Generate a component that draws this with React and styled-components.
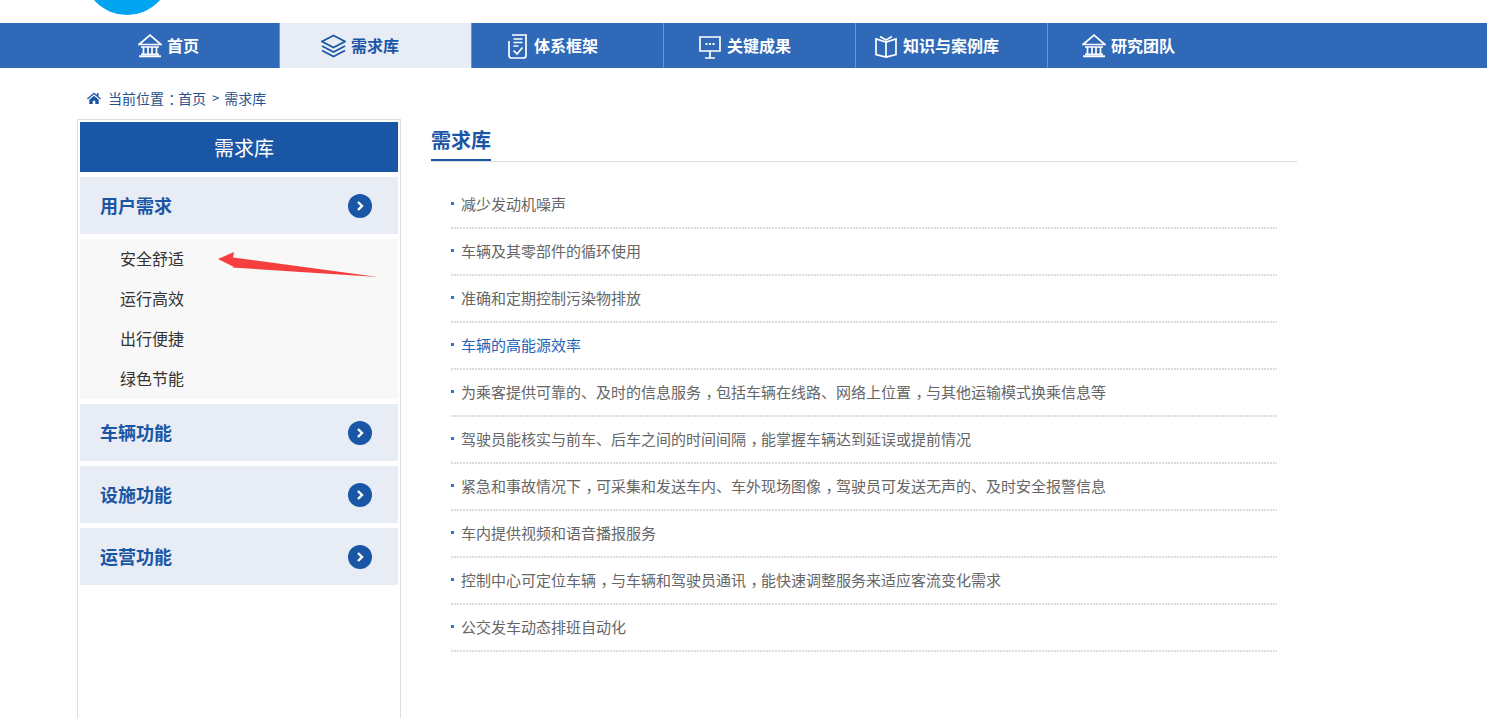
import React from "react";
import styled, { createGlobalStyle } from "styled-components";

const Global = createGlobalStyle`
  html, body { margin: 0; padding: 0; background: #fff; overflow: hidden; }
  body { font-family: "Noto Sans CJK SC", "Liberation Sans", sans-serif; }
  * { box-sizing: border-box; }
`;

const Page = styled.div`
  position: relative;
  width: 1487px;
  height: 718px;
  overflow: hidden;
`;

const TopBar = styled.div`
  position: relative;
  height: 23px;
  overflow: hidden;
`;

const Logo = styled.div`
  position: absolute;
  left: 83px;
  top: -73px;
  width: 88px;
  height: 88px;
  border-radius: 50%;
  background: #00a4ef;
`;

const Nav = styled.nav`
  display: flex;
  height: 45px;
  background: #2f69b7;
`;

const NavItem = styled.a`
  display: flex;
  align-items: center;
  gap: 5px;
  width: ${(p) => p.$w}px;
  padding: 0 0 2px ${(p) => p.$pad}px;
  border-right: 1px solid #6e96cc;
  background: ${(p) => (p.$active ? "#e8ecf5" : "transparent")};
  color: ${(p) => (p.$active ? "#1a56a6" : "#fff")};
  font-size: 16px;
  font-weight: 700;
  white-space: nowrap;

  &:last-child {
    border-right: 0;
  }
`;

const Crumbs = styled.div`
  display: flex;
  align-items: center;
  height: 51px;
  padding: 9px 0 0 87px;
  color: #24528f;
  font-size: 14px;
  line-height: 20px;
`;

const CrumbIcon = styled.svg`
  width: 14px;
  height: 12px;
  margin-right: 7px;
  fill: #1a56a6;
`;

const CrumbSep = styled.span`
  margin: 0 5px 0 6px;
  font-size: 13px;
`;

/* full-width marks sit centred in the em box in the reference */
const Mark = styled.span`
  padding: 0 0.2em 0 0.3em;
  font-feature-settings: "halt";
`;

const Main = styled.div`
  display: flex;
  gap: 30px;
  padding-left: 77px;
`;

const Side = styled.aside`
  display: flex;
  flex-direction: column;
  gap: 5px;
  width: 324px;
  height: 620px;
  padding: 2px;
  border: 1px solid #ddd;
`;

const SideTitle = styled.div`
  flex: none;
  height: 50px;
  padding-left: 10px;
  line-height: 52px;
  background: #1a56a6;
  color: #fff;
  font-size: 20px;
  text-align: center;
`;

const Group = styled.div`
  flex: none;
  display: flex;
  align-items: center;
  justify-content: space-between;
  height: 57px;
  padding: 0 26px 2px 20px;
  background: #e8ecf5;
  color: #1a56a6;
  font-size: 18px;
  font-weight: 700;
`;

const Chevron = styled.span`
  display: flex;
  align-items: center;
  justify-content: center;
  width: 24px;
  height: 24px;
  margin-top: 2px;
  border-radius: 50%;
  background: #1a56a6;
`;

const SubList = styled.ul`
  flex: none;
  margin: 0;
  padding: 0;
  list-style: none;
  background: #f8f8f8;
`;

const SubItem = styled.li`
  height: 40px;
  padding-left: 40px;
  color: #333;
  font-size: 16px;
  line-height: 38px;
`;

const Arrow = styled.svg`
  position: absolute;
  left: 215px;
  top: 248px;
  width: 170px;
  height: 34px;
`;

const Content = styled.section`
  width: 866px;
  padding-top: 1px;
`;

const Heading = styled.div`
  height: 42px;
  border-bottom: 1px solid #ddd;
`;

const HeadingText = styled.h2`
  display: inline-block;
  height: 41px;
  margin: 0;
  border-bottom: 2px solid #1a56a6;
  color: #1a56a6;
  font-size: 20px;
  font-weight: 700;
  line-height: 40px;
`;

const Rows = styled.ul`
  margin: 20px 20px 0;
  padding: 0;
  list-style: none;
`;

const Row = styled.li`
  display: flex;
  align-items: center;
  gap: 7px;
  height: 47px;
  padding-bottom: 5px;
  background: repeating-linear-gradient(90deg, #dcdcdc 0 2px, transparent 2px 3px) left bottom / 100% 2px no-repeat;
  color: ${(p) => (p.$hot ? "#1f62b8" : "#666")};
  font-size: 15px;
  white-space: nowrap;
`;

const Bullet = styled.i`
  width: 3px;
  height: 3px;
  background: #2a75d8;
`;

const NavSvg = styled.svg`
  width: ${(p) => p.$size || 24}px;
  height: 28px;
  fill: none;
  stroke: currentColor;
  stroke-width: 1.7;
  flex: none;
`;

const BankIcon = () => (
  <NavSvg viewBox="0 0 24 28">
    <path d="M1 13.500 12 4l11 9.500ZM3 16h18M5.500 16v7M10 16v7M14 16v7M18.500 16v7M3 23.300h18" />
    <path d="M1 25.300h22" strokeWidth="2" />
  </NavSvg>
);

const LayersIcon = () => (
  <NavSvg viewBox="0 0 25 28" $size={25}>
    <path d="M12.500 4.500 24 10.500l-11.500 6L1 10.500ZM1 15l11.500 6L24 15M1 19.500l11.500 6 11.500-6" />
  </NavSvg>
);

const ClipIcon = () => (
  <NavSvg viewBox="0 0 22 28" $size={22}>
    <path d="M5 4h14v20.500c0 1.500-1 2.500-2.500 2.500h-12C3 27 2 26 2 24.500V10" />
    <path d="M6.500 8h9M6.500 11.500h9M6.500 15h5M6.500 19.500l3.500 3.500 5.500-6.500" />
  </NavSvg>
);

const ScreenIcon = () => (
  <NavSvg viewBox="0 0 24 28">
    <path d="M2 6h20v14H2ZM12 20v7M7 27h10" />
    <path d="M7.500 13h2M11 13h2M14.500 13h2" strokeWidth="2" />
  </NavSvg>
);

const BookIcon = () => (
  <NavSvg viewBox="0 0 24 28">
    <path d="M2 8v15.500L12 26l10-2.500V8L12 11ZM12 11v15M6 5.500 12 9l6-3.500" />
  </NavSvg>
);

const navItems = [
  { label: "首页", w: 280, pad: 138, icon: <BankIcon /> },
  { label: "需求库", w: 192, pad: 41, icon: <LayersIcon />, active: true },
  { label: "体系框架", w: 192, pad: 35, icon: <ClipIcon /> },
  { label: "关键成果", w: 192, pad: 34, icon: <ScreenIcon /> },
  { label: "知识与案例库", w: 192, pad: 18, icon: <BookIcon /> },
  { label: "研究团队", w: 192, pad: 34, icon: <BankIcon /> },
];

const rows = [
  "减少发动机噪声",
  "车辆及其零部件的循环使用",
  "准确和定期控制污染物排放",
  "车辆的高能源效率",
  "为乘客提供可靠的、及时的信息服务，包括车辆在线路、网络上位置，与其他运输模式换乘信息等",
  "驾驶员能核实与前车、后车之间的时间间隔，能掌握车辆达到延误或提前情况",
  "紧急和事故情况下，可采集和发送车内、车外现场图像，驾驶员可发送无声的、及时安全报警信息",
  "车内提供视频和语音播报服务",
  "控制中心可定位车辆，与车辆和驾驶员通讯，能快速调整服务来适应客流变化需求",
  "公交发车动态排班自动化",
];

const withMarks = (text) =>
  text.split(/(，)/).map((part, i) => (part === "，" ? <Mark key={i}>，</Mark> : part));

const More = () => (
  <Chevron>
    <svg width="12" height="12" viewBox="0 0 12 12" fill="none" stroke="#fff" strokeWidth="2.400">
      <path d="M4 2l4 4-4 4" />
    </svg>
  </Chevron>
);

export default function App() {
  return (
    <Page>
      <Global />
      <TopBar>
        <Logo />
      </TopBar>
      <Nav>
        {navItems.map((n) => (
          <NavItem key={n.label} $w={n.w} $pad={n.pad} $active={n.active}>
            {n.icon}
            {n.label}
          </NavItem>
        ))}
      </Nav>
      <Crumbs>
        <CrumbIcon viewBox="0 0 14 12">
          <path d="M7 0.500 0 6.500l.8 1L7 2.300l6.200 5.200.8-1-2.500-2.100V1h-1.600v2.100ZM2.300 7.800V12h3.400V8.800h2.600V12h3.400V7.800L7 3.800Z" />
        </CrumbIcon>
        <span>
          当前位置<Mark>：</Mark>首页
        </span>
        <CrumbSep>&gt;</CrumbSep>需求库
      </Crumbs>
      <Main>
        <Side>
          <SideTitle>需求库</SideTitle>
          <Group>
            用户需求
            <More />
          </Group>
          <SubList>
            <SubItem>安全舒适</SubItem>
            <SubItem>运行高效</SubItem>
            <SubItem>出行便捷</SubItem>
            <SubItem>绿色节能</SubItem>
          </SubList>
          <Group>
            车辆功能
            <More />
          </Group>
          <Group>
            设施功能
            <More />
          </Group>
          <Group>
            运营功能
            <More />
          </Group>
        </Side>
        <Content>
          <Heading>
            <HeadingText>需求库</HeadingText>
          </Heading>
          <Rows>
            {rows.map((text, i) => (
              <Row key={text} $hot={i === 3}>
                <Bullet />
                <span>{withMarks(text)}</span>
              </Row>
            ))}
          </Rows>
        </Content>
      </Main>
      <Arrow viewBox="0 0 170 34">
        <path d="M3 11 19 4l-1 5.500L163 29 17 19.500 19 19Z" fill="#f63e3e" />
      </Arrow>
    </Page>
  );
}
